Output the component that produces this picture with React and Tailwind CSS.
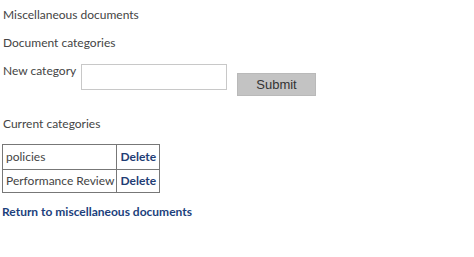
const categories = ['policies', 'Performance Review'];

const App = () => {
  return (
    <div className="w-[474px] h-[257px] bg-white text-[12px] leading-[16px] text-[#444] font-['Lato',sans-serif]">
      <div className="pl-[3px] pt-[7px]">
        <p>Miscellaneous documents</p>
        <p className="mt-[12px]">Document categories</p>

        {/* new category form */}
        <form className="flex items-start mt-[12px]" onSubmit={(e) => e.preventDefault()}>
          <label className="w-[78px]">New category</label>
          <input
            type="text"
            className="w-[146px] h-[26px] mt-[1px] border border-[#c8c8c8] bg-white px-1 outline-none"
          />
          <button
            type="submit"
            className="ml-[10px] mt-[10px] w-[79px] h-[23px] bg-[#c3c3c3] border border-[#b9b9b9] text-[13px] text-[#333] font-['Liberation_Sans',Arial,sans-serif]"
          >
            Submit
          </button>
        </form>

        <p className="mt-[20px]">Current categories</p>
      </div>

      <table className="ml-[2px] mt-[12px] border-collapse border border-[#555]">
        <tbody>
          {categories.map((name, i) => (
            <tr key={name} className={i === 0 ? 'h-[25px]' : 'h-[23px]'}>
              <td className="border border-[#777] pl-[3px] pr-[2px] py-0">{name}</td>
              <td className="border border-[#777] px-[3px] py-0 font-bold text-[#1f3d75]">
                <a href="#">Delete</a>
              </td>
            </tr>
          ))}
        </tbody>
      </table>

      <div className="pl-[2px] mt-[11px]">
        <a href="#" className="font-bold text-[#1c3f7c]">Return to miscellaneous documents</a>
      </div>
    </div>
  );
};

export default App;
